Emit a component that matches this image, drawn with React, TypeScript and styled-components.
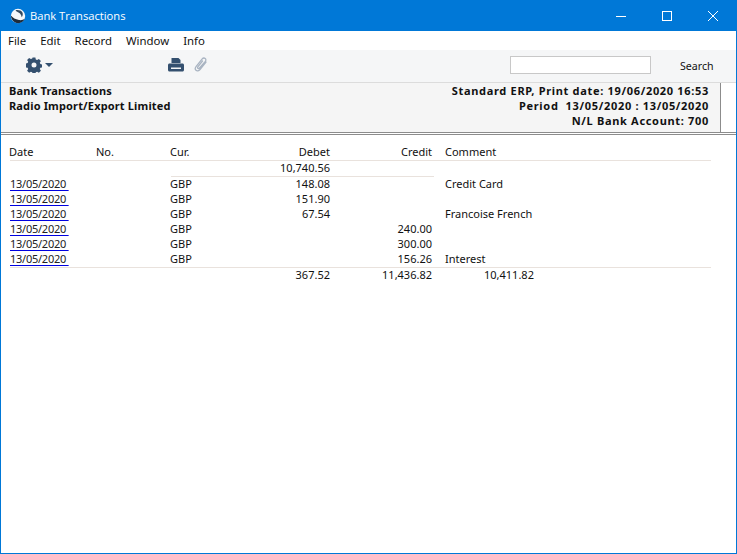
import React from "react";
import styled, {createGlobalStyle} from "styled-components";

const GlobalStyle = createGlobalStyle`
  html, body {
    margin: 0;
    padding: 0;
    background: #fff;
  }
  body {
    font-family: "Noto Sans", "Open Sans", sans-serif;
    font-size: 11px;
    color: #111;
  }
`
const Window = styled.div`
  display: flex;
  flex-direction: column;
  width: 737px;
  height: 554px;
  box-sizing: border-box;
  border: 1px solid #0078d7;
  border-top: 0;
  background: #fff;
  overflow: hidden;
`
const TitleBar = styled.div`
  display: flex;
  flex: none;
  align-items: center;
  height: 31px;
  padding-left: 9px;
  background: #0078d7;
  color: #fff;
`
const AppLogo = styled.svg`
  width: 16px;
  height: 16px;
  flex: none;
`
const TitleText = styled.div`
  flex: 1;
  margin-left: 4px;
  font-family: "Open Sans", sans-serif;
  font-size: 11.2px;
`
const WinButton = styled.div`
  display: flex;
  align-items: center;
  justify-content: center;
  width: 46px;
  height: 31px;
  svg {
    width: 12px;
    height: 12px;
  }
`
const MenuBar = styled.div`
  display: flex;
  flex: none;
  align-items: center;
  height: 19px;
  padding-left: 7px;
  gap: 14px;
  font-size: 11.4px;
  background: #fff;
`
const Toolbar = styled.div`
  display: flex;
  flex: none;
  align-items: center;
  height: 33px;
  box-sizing: border-box;
  padding: 0 23px 2px 25px;
  background: #f5f6f7;
  border-bottom: 1px solid #dcdcdc;
`
const ToolIcon = styled.svg<{$left?: number}>`
  flex: none;
  margin-left: ${p => p.$left || 0}px;
`
const SearchInput = styled.div`
  width: 139px;
  height: 16px;
  margin-left: auto;
  background: #fff;
  border: 1px solid #c8c8c8;
`
const SearchLabel = styled.div`
  width: 33px;
  margin: 2px 0 0 29px;
  font-size: 10.6px;
  white-space: nowrap;
`
const ReportHeader = styled.div`
  flex: none;
  height: 52px;
  box-sizing: border-box;
  padding-right: 15px;
  background: #fff;
  border-bottom: 3px double #8c8c8c;
`
const HeaderBand = styled.div`
  display: flex;
  justify-content: space-between;
  height: 49px;
  box-sizing: border-box;
  padding: 0 11px 0 8px;
  background: #f5f5f5;
  border-right: 1px solid #8c8c8c;
  font-weight: 700;
  line-height: 15px;
`
const HeaderColumn = styled.div<{$right?: boolean}>`
  text-align: ${p => (p.$right ? "right" : "left")};
  letter-spacing: ${p => (p.$right ? "0.68px" : "0.15px")};
  white-space: pre;
`
const Report = styled.div`
  padding: 9px 0 0 8px;
  width: 702px;
`
const Row = styled.div`
  display: grid;
  grid-template-columns: 87px 74px 62px 98px 102px 13px 1fr;
  height: 15px;
  line-height: 15px;
  white-space: nowrap;
  span:nth-child(4), span:nth-child(5) {
    text-align: right;
  }
`
const Rule = styled.div<{$inset?: number; $width?: number}>`
  height: 1px;
  margin: 1px 0 -1px ${p => p.$inset || 0}px;
  width: ${p => (p.$width ? p.$width + "px" : "auto")};
  background: #e9e2dd;
`
const DateLink = styled.a`
  color: #222;
  letter-spacing: -0.25px;
  text-decoration: underline;
  text-decoration-color: #0000e0;
  text-underline-offset: 2px;
  margin-left: 1px;
  white-space: pre;
`
const Total = styled.span`
  padding-left: 39px;
`

const rows = [
  {debet: "148.08", credit: "", comment: "Credit Card"},
  {debet: "151.90", credit: "", comment: ""},
  {debet: "67.54", credit: "", comment: "Francoise French"},
  {debet: "", credit: "240.00", comment: ""},
  {debet: "", credit: "300.00", comment: ""},
  {debet: "", credit: "156.26", comment: "Interest"},
]

const App = () => {
  return (
    <Window>
      <GlobalStyle />
      <TitleBar>
        <AppLogo viewBox="0 0 16 16">
          <circle cx="8" cy="8" r="7.2" fill="#f4f7fa" />
          <path d="M.9 7.500c.2 4 3.200 7.700 7.300 7.700 3.200 0 5.800-2 6.700-4.700-1.500 1.300-3.800 2-6 1.500C5.500 11.400 2.700 9.800.9 7.500z" fill="#1d2b3a" />
          <path d="M5.500 2.200c2.500-.8 5.600 0 6.800 2 .9 1.700.5 3.700-.7 5-.1-1.800-1-3.400-2.700-4.400-1.100-.7-2.400-1.200-3.400-2.600z" fill="#33495f" />
        </AppLogo>
        <TitleText>Bank Transactions</TitleText>
        <WinButton>
          <svg viewBox="0 0 12 12"><path d="M1 6.500h10" stroke="#fff" fill="none" /></svg>
        </WinButton>
        <WinButton>
          <svg viewBox="0 0 12 12"><rect x="1.500" y="1.500" width="9" height="9" stroke="#fff" fill="none" /></svg>
        </WinButton>
        <WinButton>
          <svg viewBox="0 0 12 12"><path d="M1 1l10 10M11 1L1 11" stroke="#fff" fill="none" /></svg>
        </WinButton>
      </TitleBar>
      <MenuBar>
        <span>File</span>
        <span>Edit</span>
        <span>Record</span>
        <span>Window</span>
        <span>Info</span>
      </MenuBar>
      <Toolbar>
        <ToolIcon width="16" height="16" viewBox="0 0 16 16">
          <path fill="#34506f" fillRule="evenodd" d="M6.600.5h2.800l.4 2 1.300.6 1.800-1.100 2 2-1.100 1.800.6 1.300 2 .4v2.800l-2 .4-.6 1.300 1.100 1.800-2 2-1.800-1.100-1.300.6-.4 2H6.600l-.4-2-1.300-.6-1.800 1.100-2-2 1.100-1.800-.6-1.300-2-.4V6.500l2-.4.6-1.300L1.100 3l2-2 1.800 1.100 1.300-.6zM8 5.500a2.500 2.500 0 1 0 0 5 2.500 2.500 0 0 0 0-5z" />
        </ToolIcon>
        <ToolIcon $left={3} width="8" height="4" viewBox="0 0 8 4">
          <path d="M0 0h8L4 4z" fill="#34506f" />
        </ToolIcon>
        <ToolIcon $left={115} width="16" height="14" viewBox="0 0 16 14">
          <path fill="#34506f" fillRule="evenodd" d="M3.500 0h7l2 2v3H3.500zM1.500 5.500h13c.8 0 1.500.7 1.500 1.500v5c0 .8-.7 1.500-1.500 1.500h-13C.7 13.500 0 12.800 0 12V7c0-.8.7-1.500 1.500-1.500zM3 9.500v1.500h10V9.500z" />
        </ToolIcon>
        <ToolIcon $left={10} width="14" height="16" viewBox="0 0 14 16">
          <path fill="none" stroke="#a9b4c2" strokeWidth="1.300" strokeLinecap="round" d="M12 5L6 12.500c-1.200 1.500-3 1.700-4 .8s-.9-2.600.2-4L8 2.200c1-1.200 2.300-1.400 3.200-.7s.9 2-.1 3.200L5.500 11c-.6.7-1.300.8-1.700.4s-.3-1 .2-1.700L8.500 4" />
        </ToolIcon>
        <SearchInput />
        <SearchLabel>Search</SearchLabel>
      </Toolbar>
      <ReportHeader>
        <HeaderBand>
          <HeaderColumn>
            {"Bank Transactions\nRadio Import/Export Limited"}
          </HeaderColumn>
          <HeaderColumn $right>
            {"Standard ERP, Print date: 19/06/2020 16:53\nPeriod  13/05/2020 : 13/05/2020\nN/L Bank Account: 700"}
          </HeaderColumn>
        </HeaderBand>
      </ReportHeader>
      <Report>
        <Row>
          <span>Date</span>
          <span>No.</span>
          <span>Cur.</span>
          <span>Debet</span>
          <span>Credit</span>
          <span />
          <span>Comment</span>
        </Row>
        <Rule $inset={1} />
        <Row>
          <span />
          <span />
          <span />
          <span>10,740.56</span>
        </Row>
        <Rule $inset={162} $width={263} />
        {rows.map((row, i) => (
          <Row key={i}>
            <span><DateLink>{"13/05/2020 "}</DateLink></span>
            <span />
            <span>GBP</span>
            <span>{row.debet}</span>
            <span>{row.credit}</span>
            <span />
            <span>{row.comment}</span>
          </Row>
        ))}
        <Rule $inset={1} />
        <Row>
          <span />
          <span />
          <span />
          <span>367.52</span>
          <span>11,436.82</span>
          <span />
          <Total>10,411.82</Total>
        </Row>
      </Report>
    </Window>
  )
}

export default App
